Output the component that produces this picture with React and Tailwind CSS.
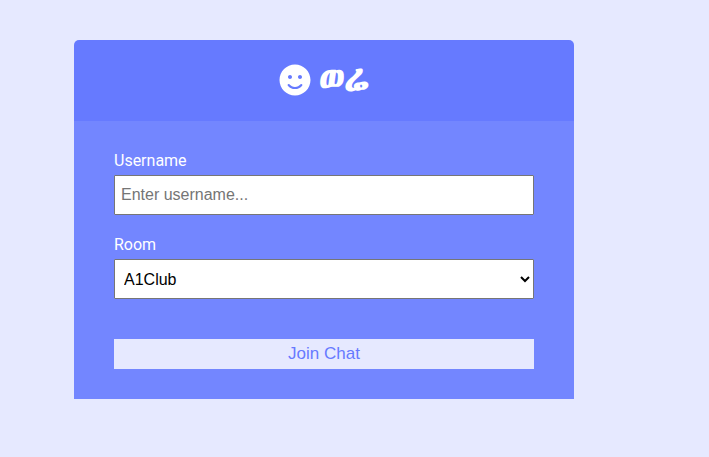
import { FaSmile } from "react-icons/fa";

export default function App() {
  return (
    <div className="min-h-screen bg-[#e6e9ff] px-[74px] py-10 font-['Roboto',sans-serif] text-base text-white">
      <main className="w-full max-w-[500px]">
        <header className="flex items-center justify-center gap-2 rounded-t-[5px] bg-[#667aff] px-5 pt-[19px] pb-[21px]">
          <FaSmile className="size-8" />
          <h1 className="font-['Abyssinica_SIL',serif] text-[36px] leading-[41px] font-bold">ወሬ</h1>
        </header>
        <form className="bg-[#7386ff] px-10 py-[30px]">
          <div className="mb-5">
            <label htmlFor="username" className="mb-1 block leading-5">Username</label>
            <input
              id="username"
              type="text"
              placeholder="Enter username..."
              className="block h-10 w-full rounded-[1px] border border-[#767676] bg-white px-[6px] font-['Liberation_Sans',sans-serif] text-black placeholder:text-[#757575]"
            />
          </div>
          <div className="mb-10">
            <label htmlFor="room" className="mb-1 block leading-5">Room</label>
            <select
              id="room"
              className="block h-10 w-full rounded-[1px] border border-[#767676] bg-white px-[5px] font-['Liberation_Sans',sans-serif] text-black"
            >
              <option>A1Club</option>
            </select>
          </div>
          <button type="submit" className="block h-[30px] w-full bg-[#e6e9ff] font-['Liberation_Sans',sans-serif] text-[17px] text-[#667aff]">
            Join Chat
          </button>
        </form>
      </main>
    </div>
  );
}
